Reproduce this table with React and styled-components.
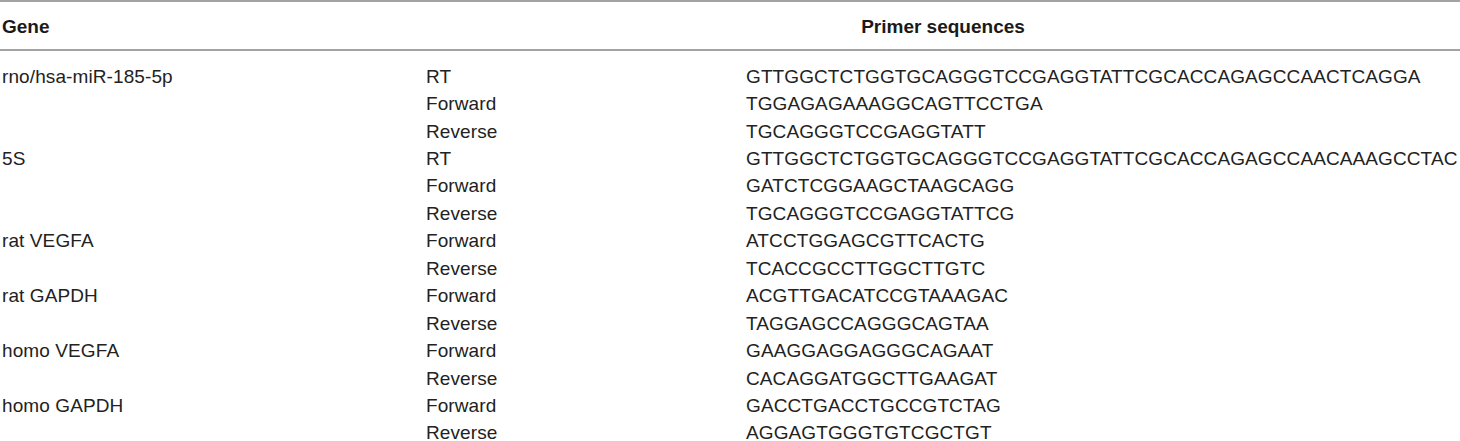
import React from 'react'
import styled, { createGlobalStyle } from 'styled-components'

const GlobalStyle = createGlobalStyle`
  body {
    margin: 0;
    background: #fff;
    font-family: "Liberation Sans", Arial, sans-serif;
    color: #222;
  }
`

const Table = styled.div`
  width: 1460px;
  border-top: 2px solid #a3a3a3;
`

const HeadRow = styled.div`
  display: grid;
  grid-template-columns: 426px 1fr;
  height: 47px;
  align-items: center;
  border-bottom: 2px solid #a3a3a3;
  font-weight: bold;
  font-size: 19px;
  color: #1a1a1a;
`

const HeadCell = styled.div`
  padding-left: ${p => (p.center ? '0' : '2px')};
  text-align: ${p => (p.center ? 'center' : 'left')};
  padding-top: 2px;
`

const Body = styled.div`
  padding-top: 12px;
`

const Row = styled.div`
  display: grid;
  grid-template-columns: 426px 320px 1fr;
  height: 27.45px;
  align-items: center;
  font-size: 19px;
  letter-spacing: 0.1px;
  white-space: nowrap;
`

const Cell = styled.div`
  padding-left: ${p => (p.first ? '2px' : '0')};
`

const data = [
  { gene: 'rno/hsa-miR-185-5p', rows: [
    ['RT', 'GTTGGCTCTGGTGCAGGGTCCGAGGTATTCGCACCAGAGCCAACTCAGGA'],
    ['Forward', 'TGGAGAGAAAGGCAGTTCCTGA'],
    ['Reverse', 'TGCAGGGTCCGAGGTATT'],
  ] },
  { gene: '5S', rows: [
    ['RT', 'GTTGGCTCTGGTGCAGGGTCCGAGGTATTCGCACCAGAGCCAACAAAGCCTAC'],
    ['Forward', 'GATCTCGGAAGCTAAGCAGG'],
    ['Reverse', 'TGCAGGGTCCGAGGTATTCG'],
  ] },
  { gene: 'rat VEGFA', rows: [
    ['Forward', 'ATCCTGGAGCGTTCACTG'],
    ['Reverse', 'TCACCGCCTTGGCTTGTC'],
  ] },
  { gene: 'rat GAPDH', rows: [
    ['Forward', 'ACGTTGACATCCGTAAAGAC'],
    ['Reverse', 'TAGGAGCCAGGGCAGTAA'],
  ] },
  { gene: 'homo VEGFA', rows: [
    ['Forward', 'GAAGGAGGAGGGCAGAAT'],
    ['Reverse', 'CACAGGATGGCTTGAAGAT'],
  ] },
  { gene: 'homo GAPDH', rows: [
    ['Forward', 'GACCTGACCTGCCGTCTAG'],
    ['Reverse', 'AGGAGTGGGTGTCGCTGT'],
  ] },
]

export default function App() {
  return (
    <>
      <GlobalStyle />
      <Table>
        <HeadRow>
          <HeadCell>Gene</HeadCell>
          <HeadCell center>Primer sequences</HeadCell>
        </HeadRow>
        <Body>
          {data.map(group =>
            group.rows.map((r, i) => (
              <Row key={group.gene + i}>
                <Cell first>{i === 0 ? group.gene : ''}</Cell>
                <Cell>{r[0]}</Cell>
                <Cell>{r[1]}</Cell>
              </Row>
            ))
          )}
        </Body>
      </Table>
    </>
  )
}
